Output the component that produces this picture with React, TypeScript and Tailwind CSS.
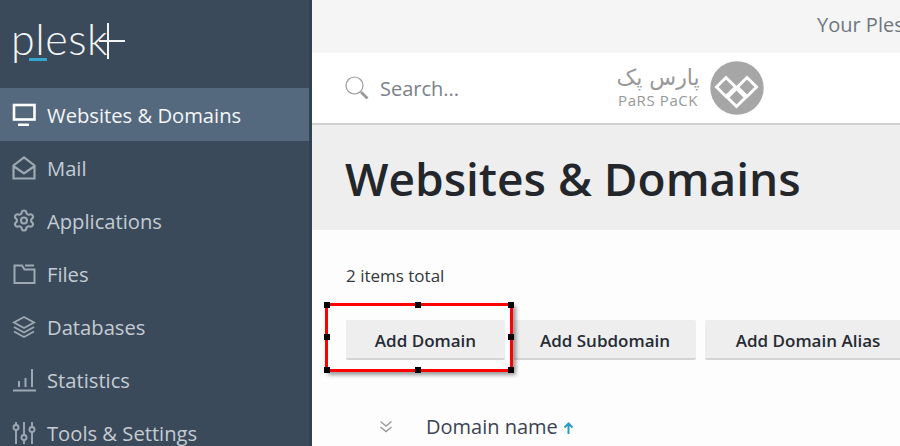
import type { ReactNode } from 'react';
import { Settings } from 'lucide-react';

const font = { sans: "font-['Open_Sans',sans-serif]" };

function MonitorIcon() {
  return (
    <svg width="24" height="24" viewBox="0 0 24 24" fill="none" stroke="currentColor">
      <rect x="2" y="2" width="20.5" height="14.5" strokeWidth="2.6" />
      <rect x="6" y="20.5" width="11" height="2.5" fill="currentColor" strokeWidth="0" />
    </svg>
  );
}

function MailIcon() {
  return (
    <svg width="24" height="24" viewBox="0 0 24 24" fill="none" stroke="currentColor" strokeWidth="2.2">
      <path d="M1.500 9.500 12 1.500l10.500 8v13h-21z" />
      <path d="M2 10.500l10 7 10-7" />
    </svg>
  );
}

function FolderIcon() {
  return (
    <svg width="24" height="24" viewBox="0 0 24 24" fill="none" stroke="currentColor" strokeWidth="2">
      <path d="M2.500 3.500h7.500l2.500 4h10v13.500h-20z" />
      <path d="M13 3.500h9" />
    </svg>
  );
}

function LayersIcon() {
  return (
    <svg width="24" height="24" viewBox="0 0 24 24" fill="none" stroke="currentColor" strokeWidth="1.9">
      <path d="M12 2 22 7.500 12 13 2 7.500z" />
      <path d="M2 12l10 5.500L22 12" />
      <path d="M2 16.500 12 22l10-5.500" />
    </svg>
  );
}

function StatsIcon() {
  return (
    <svg width="24" height="24" viewBox="0 0 24 24" fill="none" stroke="currentColor">
      <path d="M1 22.500h23" strokeWidth="2" />
      <path d="M7 19v-6M13.500 19v-9M20 19V1" strokeWidth="2" />
    </svg>
  );
}

function SlidersIcon() {
  return (
    <svg width="24" height="24" viewBox="0 0 24 24" fill="none" stroke="currentColor" strokeWidth="1.9">
      <path d="M4 1v3M4 9v14M12 1v13M12 19v4M20 1v5M20 11v12" />
      <circle cx="4" cy="6.500" r="2.500" />
      <circle cx="12" cy="16.500" r="2.500" />
      <circle cx="20" cy="8.500" r="2.500" />
    </svg>
  );
}

function SearchIcon() {
  return (
    <svg width="24" height="24" viewBox="0 0 24 24" fill="none" stroke="#9a9a9a">
      <circle cx="9.500" cy="9.500" r="8.500" strokeWidth="1.200" />
      <path d="M16 16l6.500 6.500" strokeWidth="2.800" />
    </svg>
  );
}

function ParsPackMark() {
  return (
    <svg width="54" height="54" viewBox="0 0 54 54">
      <circle cx="27" cy="27" r="26.700" fill="#a6a6a6" />
      <g fill="#a6a6a6" stroke="#fff" strokeWidth="3">
        <path d="M16 16.500 25.500 26 16 35.500 6.500 26z" />
        <path d="M37 16.500 46.500 26 37 35.500 27.500 26z" />
        <path d="M26.500 27.500 35.500 36.500 26.500 45.500 17.500 36.500z" />
      </g>
    </svg>
  );
}

function NavItem({ icon, label, active }: { icon: ReactNode; label: string; active?: boolean }) {
  return (
    <div
      className={
        'flex h-[53px] shrink-0 items-center pl-[12px] text-[20.2px] ' +
        (active ? 'bg-[#54697e] text-[#f4f6f8]' : 'text-[#c5ccd3]')
      }
    >
      <span className={'mr-[11px] flex w-[24px] justify-center ' + (active ? 'text-white' : 'text-[#9ea8b2]')}>
        {icon}
      </span>
      <span className="pt-[2px]">{label}</span>
    </div>
  );
}

function ToolButton({ label, width }: { label: string; width: string }) {
  return (
    <div
      className={
        'flex h-[40px] shrink-0 items-center justify-center rounded-[2px] border-b-2 border-[#d5d5d5] bg-[#eeeeee] pt-[3px] text-[17px] font-semibold text-[#262b34] ' +
        width
      }
    >
      {label}
    </div>
  );
}

function Handle({ className }: { className: string }) {
  return <span className={'absolute h-[6px] w-[6px] bg-black ' + className} />;
}

export default function App() {
  return (
    <div className={'flex h-[446px] w-[900px] overflow-hidden bg-[#fdfdfd] ' + font.sans}>
      <aside className="flex w-[312px] shrink-0 flex-col overflow-hidden border-r-[3px] border-[#334252] bg-[#3a4a5a]">
        <div className="relative h-[88px] shrink-0">
          <span className="absolute left-[11px] top-[11px] font-['Lato',sans-serif] text-[43px] font-light leading-[56px] tracking-[0.5px] text-[#f2f4f6]">
            plesk
          </span>
          <span className="absolute left-[29px] top-[58px] h-[3px] w-[18px] bg-[#35a7cf]" />
          <span className="absolute left-[99px] top-[40px] h-[2px] w-[26px] bg-[#f2f4f6]" />
          <span className="absolute left-[107px] top-[23px] h-[36px] w-[2px] bg-[#f2f4f6]" />
        </div>
        <NavItem active icon={<MonitorIcon />} label="Websites & Domains" />
        <NavItem icon={<MailIcon />} label="Mail" />
        <NavItem icon={<Settings size={25} strokeWidth={2.1} />} label="Applications" />
        <NavItem icon={<FolderIcon />} label="Files" />
        <NavItem icon={<LayersIcon />} label="Databases" />
        <NavItem icon={<StatsIcon />} label="Statistics" />
        <NavItem icon={<SlidersIcon />} label="Tools & Settings" />
      </aside>

      <main className="flex min-w-0 flex-1 flex-col">
        <div className="flex h-[53px] shrink-0 items-center overflow-hidden whitespace-nowrap bg-[#f5f5f5] pb-[3px] pl-[505px] text-[20px] text-[#6f7780]">
          Your Plesk
        </div>

        <div className="flex h-[72px] shrink-0 items-center border-b-2 border-[#cfcfcf] bg-white pl-[33px]">
          <SearchIcon />
          <span className="ml-[11px] pt-[2px] text-[20px] text-[#7b8189]">Search...</span>
          <div className="ml-[158px] flex w-[82px] flex-col items-center gap-[5px] text-[#989898]">
            <span className="whitespace-nowrap font-['DejaVu_Sans',sans-serif] text-[22px] leading-[20px]">پارس پک</span>
            <span className="whitespace-nowrap text-[15px] font-medium leading-[15px] tracking-[0.6px]">PaRS PaCK</span>
          </div>
          <div className="ml-[11px]">
            <ParsPackMark />
          </div>
        </div>

        <div className="flex h-[105px] shrink-0 items-center bg-[#eeeeee] pl-[33px]">
          <h1 className="text-[46px] font-semibold leading-none text-[#23262b]">Websites &amp; Domains</h1>
        </div>

        <div className="pl-[34px] pt-[36px] text-[17px] leading-[20px] text-[#33373d]">2 items total</div>

        <div className="relative mt-[34px] flex gap-[9px] pl-[34px]">
          <ToolButton label="Add Domain" width="w-[159px]" />
          <ToolButton label="Add Subdomain" width="w-[182px]" />
          <ToolButton label="Add Domain Alias" width="w-[206px]" />

          <div className="absolute left-[13px] top-[-17px] h-[69px] w-[188px] border-[3px] border-[#ff0000] shadow-[3px_3px_4px_rgba(0,0,0,0.4)]">
            <Handle className="left-[-4px] top-[-4px]" />
            <Handle className="left-[87px] top-[-4px]" />
            <Handle className="right-[-4px] top-[-4px]" />
            <Handle className="left-[-4px] top-[28px]" />
            <Handle className="right-[-4px] top-[28px]" />
            <Handle className="bottom-[-4px] left-[-4px]" />
            <Handle className="bottom-[-4px] left-[87px]" />
            <Handle className="bottom-[-4px] right-[-4px]" />
          </div>
        </div>

        <div className="mt-[53px] flex items-center pl-[67px] text-[20px] leading-[28px] text-[#3a4452]">
          <svg width="14" height="14" viewBox="0 0 14 14" fill="none" stroke="#9a9a9a" strokeWidth="1.400">
            <path d="M1.500 1.500 7 6l5.500-4.500M1.500 7 7 11.500 12.500 7" />
          </svg>
          <span className="ml-[33px]">Domain name</span>
          <svg className="ml-[5px] mt-[2px]" width="11" height="12" viewBox="0 0 11 12" fill="none" stroke="#2b9ac9" strokeWidth="2">
            <path d="M1.500 5.500 5.500 1.500l4 4M5.500 2v10" />
          </svg>
        </div>
      </main>
    </div>
  );
}
